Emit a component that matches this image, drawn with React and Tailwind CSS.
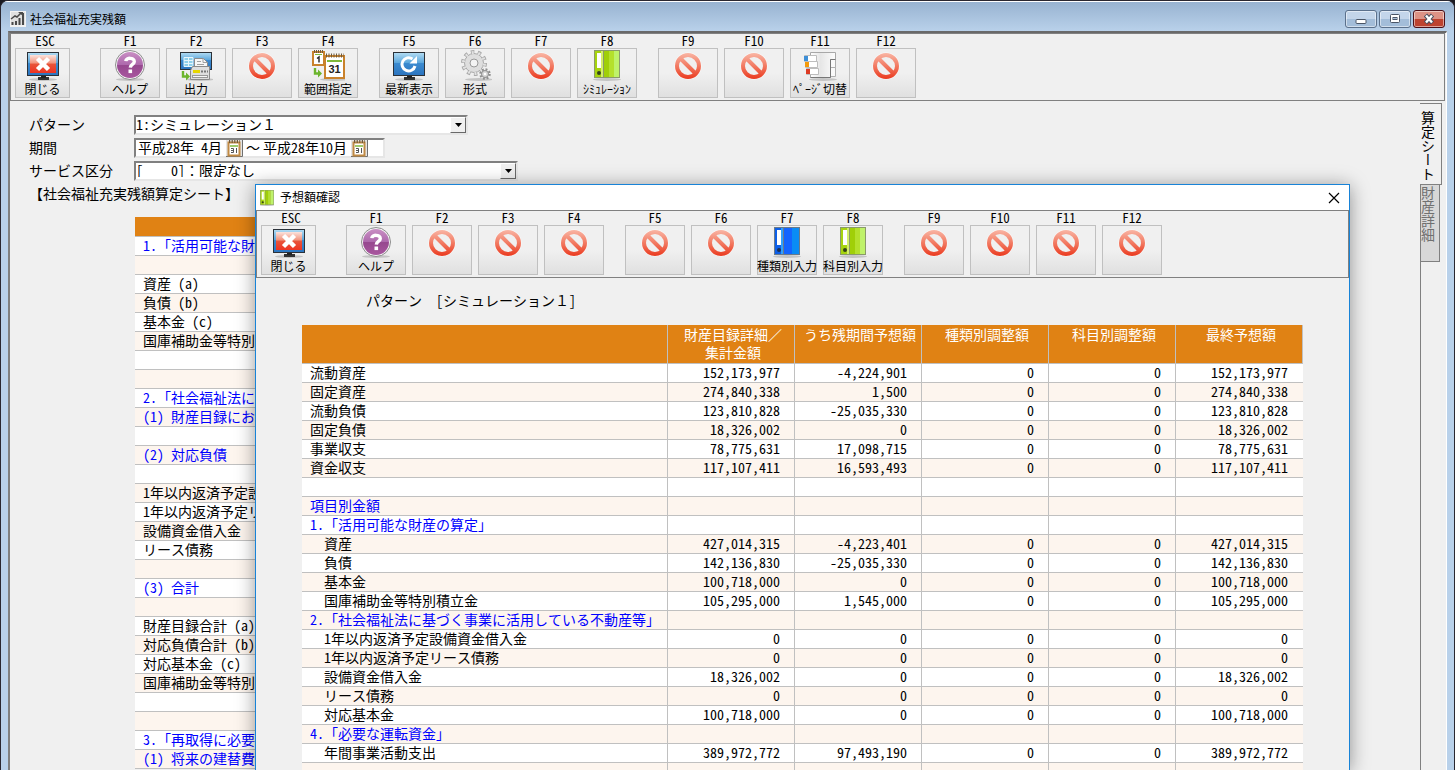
import React from 'react';
import clsx from 'clsx';

const Shadow = ({ cx = 17 }) => <ellipse cx={cx} cy="30.5" rx="14" ry="1.5" fill="#c4c4c4" />;

const Monitor = ({ children }) => (
  <>
    <Shadow />
    <rect x="12" y="28" width="11" height="3" fill="#333" />
    <rect x="15" y="26" width="5" height="3" fill="#222" />
    <rect x="1.5" y="3.5" width="31" height="23" fill="url(#screen)" stroke="#2b3138" />
    {children}
  </>
);

const ScreenGradient = () => (
  <linearGradient id="screen" x1="0" y1="0" x2="0" y2="1">
    <stop offset="0" stopColor="#b4ddf3" />
    <stop offset="0.45" stopColor="#5aa6dc" />
    <stop offset="0.46" stopColor="#3c8bd0" />
    <stop offset="1" stopColor="#2b74bf" />
  </linearGradient>
);

const CloseIcon = () => (
  <>
    <defs>
      <ScreenGradient />
      <linearGradient id="red" x1="0" y1="0" x2="0" y2="1">
        <stop offset="0" stopColor="#fbe3dd" />
        <stop offset="0.45" stopColor="#f2937c" />
        <stop offset="0.5" stopColor="#e8553b" />
        <stop offset="1" stopColor="#ee3322" />
      </linearGradient>
    </defs>
    <Monitor>
      <rect x="4" y="6" width="26" height="18" fill="url(#red)" />
      <path d="M11.5 9.5 L22.5 20.5 M22.5 9.5 L11.5 20.5" stroke="#fff" strokeWidth="4.5" />
    </Monitor>
  </>
);

const HelpIcon = () => (
  <>
    <defs>
      <linearGradient id="purple" x1="0" y1="0" x2="0" y2="1">
        <stop offset="0" stopColor="#c98fc4" />
        <stop offset="0.5" stopColor="#ad68ac" />
        <stop offset="0.52" stopColor="#96488f" />
        <stop offset="1" stopColor="#a9579f" />
      </linearGradient>
    </defs>
    <Shadow />
    <circle cx="17" cy="16" r="14.5" fill="#f4f4f4" stroke="#8d8d8d" />
    <circle cx="17" cy="16" r="13" fill="url(#purple)" />
    <path d="M12.8 12.2 C13 8.4 21.4 8.2 21.3 12.6 C21.2 15.6 17.4 15.2 17.3 18.6" fill="none" stroke="#fff" strokeWidth="3.4" />
    <rect x="15.5" y="20.5" width="3.6" height="3.6" fill="#fff" />
  </>
);

const BanIcon = () => (
  <>
    <defs>
      <linearGradient id="ban" gradientUnits="userSpaceOnUse" x1="0" y1="4" x2="0" y2="30">
        <stop offset="0" stopColor="#f9b5a4" />
        <stop offset="0.5" stopColor="#f27a62" />
        <stop offset="1" stopColor="#ea3a1f" />
      </linearGradient>
    </defs>
    <circle cx="17" cy="17" r="13.5" fill="#fff" opacity="0.8" />
    <circle cx="17" cy="17" r="11" fill="#f0f0f0" stroke="url(#ban)" strokeWidth="4" />
    <path d="M9.5 9.5 L24.5 24.5" stroke="url(#ban)" strokeWidth="4" />
  </>
);

const GreenArrow = ({ y }) => (
  <>
    <path d={`M4 ${y} v5.5 h4`} fill="none" stroke="#6cb52d" strokeWidth="2.4" />
    <path d={`M7 ${y + 1.5} l4 4 l-4 4 z`} fill="#6cb52d" />
  </>
);

const OutputIcon = () => (
  <>
    <defs><ScreenGradient /></defs>
    <Shadow cx={21} />
    <rect x="1.5" y="3.5" width="31" height="17" fill="url(#screen)" stroke="#2b3138" />
    <path d="M5 8.5 h9 v9 h-9 z M5 11.5 h9 M5 14.5 h9 M9.5 8.5 v9" fill="#8ed0ea" stroke="#e8f6fc" />
    <path d="M15.5 9.5 h9 l4 4 v6 h-13 z" fill="#f6f6f6" stroke="#8a8a8a" />
    <path d="M24 9.5 v4 h4 M18 12.5 h4 M18 15.5 h7" fill="none" stroke="#a0a0a0" />
    <path d="M13.5 17.5 h17 v13 h-19 v-9 z" fill="#dedede" stroke="#8a8a8a" />
    <rect x="14" y="21" width="7" height="3" fill="#e6d600" />
    <path d="M22 22.5 h7" stroke="#777" strokeDasharray="2 1" strokeWidth="2" />
    <rect x="13.5" y="26.5" width="15" height="2" fill="#f7f7f7" stroke="#999" />
    <GreenArrow y={22} />
  </>
);

const RangeIcon = () => (
  <>
    <Shadow cx={23} />
    <rect x="2" y="3" width="11" height="13" fill="#fff" stroke="#c9822c" strokeWidth="2" />
    <path d="M3 2.5 h10" stroke="#6f5a3c" strokeWidth="3" strokeDasharray="1 1" />
    <path d="M4 5.5 h7" stroke="#7fb93a" strokeWidth="1" />
    <path d="M6 9.5 L8 8 V13.5" fill="none" stroke="#222" strokeWidth="1.4" />
    <rect x="14" y="7" width="19" height="22" fill="#fff" stroke="#c9822c" strokeWidth="2" />
    <path d="M15 6.5 h18" stroke="#6f5a3c" strokeWidth="4" strokeDasharray="1 1.5" />
    <rect x="16" y="11" width="15" height="2" fill="#7fb93a" />
    <text x="23.5" y="24" textAnchor="middle" fontSize="11" fontWeight="700" fontFamily="Liberation Sans, sans-serif" fill="#222">31</text>
    <GreenArrow y={19} />
  </>
);

const RefreshIcon = () => (
  <>
    <defs><ScreenGradient /></defs>
    <Monitor>
      <path d="M23 17 A6.6 6.6 0 1 1 20.5 10" fill="none" stroke="#fff" strokeWidth="3" />
      <path d="M25 7 V14.5 H17.5 z" fill="#fff" />
    </Monitor>
  </>
);

const GearIcon = () => (
  <>
    <Shadow cx={21} />
    <circle cx="16" cy="14" r="11" fill="none" stroke="#a9a9a9" strokeWidth="4" strokeDasharray="3.46 3.45" />
    <circle cx="16" cy="14" r="9.5" fill="#dedede" stroke="#a9a9a9" />
    <circle cx="16" cy="14" r="10.5" fill="none" stroke="#e2e2e2" strokeWidth="3" strokeDasharray="1.9 4.7" strokeDashoffset="-0.7" />
    <circle cx="16" cy="14" r="4" fill="#f4f4f4" stroke="#999" />
    <circle cx="27" cy="25" r="4.5" fill="none" stroke="#8f8f8f" strokeWidth="2.5" strokeDasharray="1.8 1.73" />
    <circle cx="27" cy="25" r="3.5" fill="#d6d6d6" stroke="#8f8f8f" />
    <circle cx="27" cy="25" r="1.3" fill="#fff" />
  </>
);

const GreenBinder = () => (
  <>
    <Shadow />
    <rect x="4" y="1" width="26" height="28" fill="#8a9a6a" />
    <rect x="5" y="2" width="8" height="26" fill="#a6d40d" />
    <rect x="11" y="2" width="2" height="26" fill="#d4ef6a" />
    <rect x="14" y="2" width="5" height="26" fill="#a0cf08" />
    <rect x="19" y="2" width="5" height="26" fill="#b4e02c" />
    <rect x="24" y="2" width="5" height="26" fill="#bff26a" />
    <rect x="7" y="4" width="4" height="15" fill="#fff" />
    <circle cx="9" cy="24" r="2" fill="#33401a" />
  </>
);

const BlueBinder = () => (
  <>
    <Shadow />
    <rect x="4" y="1" width="26" height="28" fill="#6a7a8a" />
    <rect x="5" y="2" width="8" height="26" fill="#0d5fe8" />
    <rect x="11" y="2" width="2" height="26" fill="#2fa0ff" />
    <rect x="14" y="2" width="8" height="26" fill="#1464ff" />
    <rect x="22" y="2" width="7" height="26" fill="#0a8cf5" />
    <rect x="7" y="4" width="4" height="15" fill="#fff" />
    <circle cx="9" cy="24" r="2" fill="#1c2f50" />
  </>
);

const PagesIcon = () => (
  <>
    <defs>
      <linearGradient id="page" x1="0" y1="0" x2="1" y2="0">
        <stop offset="0" stopColor="#fff" />
        <stop offset="0.4" stopColor="#e6e6e6" />
        <stop offset="1" stopColor="#fdfdfd" />
      </linearGradient>
    </defs>
    <Shadow cx={20} />
    <path d="M26.5 10.5 h6 v8 h-6 z M26.5 18.5 h6 v9 h-6 z" fill="#fafafa" stroke="#b0b0b0" />
    <path d="M7.5 3.5 h25 v7 h-5 v18 h-20 z" fill="url(#page)" stroke="#a8a8a8" />
    <path d="M32.5 10.5 h-5 v18 h-20" fill="none" stroke="#777" />
    <path d="M1.5 6.5 h12 v6 h-12 z M2.5 12.5 h12 v6 h-12 z M3.5 19.5 h12 v6 h-12 z" fill="#fff" stroke="#bdbdbd" />
    <rect x="1" y="7" width="4" height="5" fill="#3f8fd6" />
    <rect x="2" y="13" width="4" height="5" fill="#f39a0c" />
    <rect x="3" y="20" width="4" height="5" fill="#dd3b24" />
  </>
);

const BinderSmall = () => (
  <svg className="h-4 w-[14px]" viewBox="4 1 26 30"><GreenBinder /></svg>
);

const CalendarSmall = () => (
  <svg className="h-[17px] w-[17px]" viewBox="0 0 17 17">
    <rect width="17" height="17" fill="#e4e4e4" />
    <path d="M16.5 0 v16.5 h-16.5" fill="none" stroke="#707070" />
    <rect x="2.5" y="2.5" width="11" height="13" fill="#fff" stroke="#c08a44" strokeWidth="2" />
    <path d="M3 1.5 h11" stroke="#6f5a3c" strokeWidth="3" strokeDasharray="1.2 1.4" />
    <path d="M4 6 h8" stroke="#7fb93a" strokeWidth="1.5" />
    <path d="M5 8.5 h2.5 v4 h-2.5 M5 10.5 h2.5 M10.5 8 v5" fill="none" stroke="#555" />
  </svg>
);

const AppIcon = () => (
  <svg className="h-4 w-4" viewBox="0 0 16 16">
    <rect width="16" height="16" fill="#f2f2f2" />
    <rect x="1" y="1" width="14" height="13" fill="#e0e0e0" />
    <path d="M2.5 14 v-3 M6 14 v-4 M9.5 14 v-7 M13 14 v-12" stroke="#4a4a4a" strokeWidth="2" />
    <path d="M1 8 L5 5 L7 6 L11 2" fill="none" stroke="#4a4a4a" strokeWidth="1.5" />
    <path d="M8 1 h5 v4 z" fill="#4a4a4a" />
  </svg>
);

const BLANK = { Icon: BanIcon, label: '' };

const mainKeys = [
  [{ Icon: HelpIcon, label: 'ヘルプ' }, { Icon: OutputIcon, label: '出力' }, BLANK, { Icon: RangeIcon, label: '範囲指定' }],
  [{ Icon: RefreshIcon, label: '最新表示' }, { Icon: GearIcon, label: '形式' }, BLANK, { Icon: GreenBinder, label: 'ｼﾐｭﾚｰｼｮﾝ' }],
  [BLANK, BLANK, { Icon: PagesIcon, label: 'ﾍﾟｰｼﾞ切替' }, BLANK],
];

const dialogKeys = [
  [{ Icon: HelpIcon, label: 'ヘルプ' }, BLANK, BLANK, BLANK],
  [BLANK, BLANK, { Icon: BlueBinder, label: '種類別入力' }, { Icon: GreenBinder, label: '科目別入力' }],
  [BLANK, BLANK, BLANK, BLANK],
];

const sheetRows = [
  ['1.「活用可能な財', true],
  [''],
  ['資産 (a)'],
  ['負債 (b)'],
  ['基本金 (c)'],
  ['国庫補助金等特別'],
  [''],
  [''],
  ['2.「社会福祉法に', true],
  ['(1) 財産目録にお', true],
  [''],
  ['(2) 対応負債', true],
  [''],
  ['1年以内返済予定設'],
  ['1年以内返済予定リ'],
  ['設備資金借入金'],
  ['リース債務'],
  [''],
  ['(3) 合計', true],
  [''],
  ['財産目録合計 (a)'],
  ['対応負債合計 (b)'],
  ['対応基本金 (c)'],
  ['国庫補助金等特別'],
  [''],
  [''],
  ['3.「再取得に必要', true],
  ['(1) 将来の建替費', true],
];

const columns = ['財産目録詳細／\n集計金額', 'うち残期間予想額', '種類別調整額', '科目別調整額', '最終予想額'];

const forecastRows = [
  { name: '流動資産', values: ['152,173,977', '-4,224,901', '0', '0', '152,173,977'] },
  { name: '固定資産', values: ['274,840,338', '1,500', '0', '0', '274,840,338'] },
  { name: '流動負債', values: ['123,810,828', '-25,035,330', '0', '0', '123,810,828'] },
  { name: '固定負債', values: ['18,326,002', '0', '0', '0', '18,326,002'] },
  { name: '事業収支', values: ['78,775,631', '17,098,715', '0', '0', '78,775,631'] },
  { name: '資金収支', values: ['117,107,411', '16,593,493', '0', '0', '117,107,411'] },
  { name: '' },
  { name: '項目別金額', heading: true },
  { name: '1.「活用可能な財産の算定」', heading: true },
  { name: '資産', indent: true, values: ['427,014,315', '-4,223,401', '0', '0', '427,014,315'] },
  { name: '負債', indent: true, values: ['142,136,830', '-25,035,330', '0', '0', '142,136,830'] },
  { name: '基本金', indent: true, values: ['100,718,000', '0', '0', '0', '100,718,000'] },
  { name: '国庫補助金等特別積立金', indent: true, values: ['105,295,000', '1,545,000', '0', '0', '105,295,000'] },
  { name: '2.「社会福祉法に基づく事業に活用している不動産等」', heading: true },
  { name: '1年以内返済予定設備資金借入金', indent: true, values: ['0', '0', '0', '0', '0'] },
  { name: '1年以内返済予定リース債務', indent: true, values: ['0', '0', '0', '0', '0'] },
  { name: '設備資金借入金', indent: true, values: ['18,326,002', '0', '0', '0', '18,326,002'] },
  { name: 'リース債務', indent: true, values: ['0', '0', '0', '0', '0'] },
  { name: '対応基本金', indent: true, values: ['100,718,000', '0', '0', '0', '100,718,000'] },
  { name: '4.「必要な運転資金」', heading: true },
  { name: '年間事業活動支出', indent: true, values: ['389,972,772', '97,493,190', '0', '0', '389,972,772'] },
  { name: '' },
];

const KeyButton = ({ keyName, Icon, label, narrow }) => (
  <div className={clsx('flex flex-col', narrow ? 'w-[55px]' : 'w-[60px]')}>
    <span className="h-[14px] w-[60px] text-center text-[13px] leading-[14px]">{keyName}</span>
    <button
      type="button"
      aria-label={`${keyName} ${label}`}
      className="flex h-[50px] flex-col items-center border border-[#c0c0c0] bg-linear-to-b from-[#f0f0f0] from-50% to-[#e0e0e0]"
    >
      <svg className="h-8 w-[34px] shrink-0" viewBox="0 0 34 32"><Icon /></svg>
      <span className="text-xs leading-4 whitespace-nowrap">{label}</span>
    </button>
  </div>
);

const KeyBar = ({ groups }) => (
  <div className="flex shrink-0 border border-[#808080] pb-0.5 pl-1">
    <KeyButton keyName="ESC" Icon={CloseIcon} label="閉じる" narrow />
    <div className="ml-[30px] flex gap-[21px]">
      {groups.map((group, g) => (
        <div key={g} className="flex gap-1.5">
          {group.map((item, i) => (
            <KeyButton key={i} keyName={`F${g * 4 + i + 1}`} {...item} />
          ))}
        </div>
      ))}
    </div>
  </div>
);

const fieldBorder = 'border-2 border-t-[#808080] border-l-[#808080] border-r-[#e6e6e6] border-b-[#e6e6e6] bg-white';

const SelectField = ({ id, value, className }) => (
  <div className={clsx('relative flex h-5', fieldBorder, className)}>
    <select id={id} className="w-full appearance-none pb-0.5 leading-[14px] outline-none">
      <option>{value}</option>
    </select>
    <span className="pointer-events-none absolute top-0 right-0 flex h-4 w-4 items-center justify-center border border-t-white border-r-[#696969] border-b-[#696969] border-l-white bg-[#f0f0f0]">
      <svg className="h-1 w-[7px]" viewBox="0 0 7 4"><path d="M0 0 h7 L3.5 4 z" fill="#000" /></svg>
    </span>
  </div>
);

const MonthField = ({ label, value }) => (
  <>
    <input type="text" aria-label={label} defaultValue={value} className="w-[86px] pb-0.5 outline-none" />
    <button type="button" aria-label={`${label}を選択`} className="ml-0.5"><CalendarSmall /></button>
  </>
);

const SearchForm = () => (
  <form className="flex flex-col gap-[3px] leading-[18px]">
    <div className="flex h-5">
      <label htmlFor="pattern" className="w-[105px]">パターン</label>
      <SelectField id="pattern" value="1:シミュレーション１" className="w-[334px]" />
    </div>
    <div className="flex h-5">
      <span className="w-[105px]">期間</span>
      <div className={clsx('flex h-5 w-[251px] items-center pl-0.5', fieldBorder)}>
        <MonthField label="開始月" value="平成28年 4月" />
        <span className="mx-[3px] pb-0.5">～</span>
        <MonthField label="終了月" value="平成28年10月" />
      </div>
    </div>
    <div className="flex h-5">
      <label htmlFor="service" className="w-[105px]">サービス区分</label>
      <SelectField id="service" value={'[\u00a0\u00a0\u00a0\u00a00]：限定なし'} className="w-[384px]" />
    </div>
    <h2 className="h-5">【社会福祉充実残額算定シート】</h2>
  </form>
);

const SheetTable = () => (
  <table className="mt-[13px] ml-[106px] w-3/4 table-fixed border-separate border-spacing-0">
    <thead>
      <tr><th aria-label="項目" className="h-5 border-b border-[#c0c0c0] bg-[#e08214] p-0" /></tr>
    </thead>
    <tbody>
      {sheetRows.map(([name, heading], i) => (
        <tr key={i} className="bg-white even:bg-[#fdf5ee]">
          <td className={clsx('h-[19px] border-b border-[#c0c0c0] p-0 pl-2 align-top leading-4 whitespace-nowrap', heading && 'text-[#0000ff]')}>
            {name}
          </td>
        </tr>
      ))}
    </tbody>
  </table>
);

const SideTabs = () => (
  <div className="mr-1 flex w-[22px] shrink-0 flex-col pt-0.5">
    <button type="button" className="flex h-[82px] items-end border-t border-r border-b border-[#808080] pt-[7px] pl-px leading-[14px] [writing-mode:vertical-rl]">
      算定シート
    </button>
    <button type="button" className="flex h-[77px] w-5 items-end border border-t-0 border-[#808080] bg-[#d8d8d8] pt-px leading-[14px] text-[#707070] [writing-mode:vertical-rl]">
      財産詳細
    </button>
    <div className="flex-1 border-l border-[#808080]" />
  </div>
);

const ForecastTable = () => (
  <table className="w-full table-fixed border-separate border-spacing-0">
    <thead>
      <tr className="bg-[#e08214] text-white">
        <th aria-label="項目" className="h-[39px] border-r border-b border-[#c0c0c0] p-0" />
        {columns.map((col) => (
          <th key={col} className="w-[127px] border-r border-b border-[#c0c0c0] py-0 pr-0 pl-1 align-top leading-[18px] font-normal whitespace-pre-line">{col}</th>
        ))}
      </tr>
    </thead>
    <tbody>
      {forecastRows.map(({ name, heading, indent, values = ['', '', '', '', ''] }, i) => (
        <tr key={i} className="bg-white even:bg-[#fdf5ee]">
          <td
            className={clsx(
              'h-[19px] border-r border-b border-[#c0c0c0] p-0 align-top leading-4 whitespace-nowrap',
              indent ? 'pl-[22px]' : 'pl-2',
              heading && 'text-[#0000ff]',
            )}
          >
            {name}
          </td>
          {values.map((value, c) => (
            <td key={c} className="border-r border-b border-[#c0c0c0] p-0 pr-[14px] text-right align-top leading-4 last:border-r-0 last:pr-[15px]">
              {value}
            </td>
          ))}
        </tr>
      ))}
    </tbody>
  </table>
);

const ForecastDialog = () => (
  <section
    role="dialog"
    aria-label="予想額確認"
    className="absolute top-[184px] right-[105px] bottom-0 left-[255px] flex flex-col overflow-hidden border border-b-0 border-[#1883d7] bg-[#f0f0f0] shadow-[0_2px_18px_rgba(0,0,0,0.4)]"
  >
    <header className="flex h-[25px] shrink-0 items-center bg-white pr-2 pl-1 text-xs">
      <BinderSmall />
      <h2 className="ml-1.5 flex-1 pb-0.5">予想額確認</h2>
      <button type="button" aria-label="閉じる">
        <svg className="h-[14px] w-[14px]" viewBox="0 0 14 14"><path d="M2 2 L12 12 M12 2 L2 12" stroke="#000" strokeWidth="1.2" /></svg>
      </button>
    </header>
    <KeyBar groups={dialogKeys} />
    <div className="px-[46px] pt-[13px]">
      <p className="mb-[14px] h-5 pl-16 leading-[18px]">パターン　[シミュレーション１]</p>
      <ForecastTable />
    </div>
  </section>
);

const captionButton = 'flex h-[18px] w-8 items-center justify-center rounded-[3px] border shadow-[inset_0_0_0_1px_rgba(255,255,255,0.5)]';

const TitleBar = () => (
  <header className="flex h-[30px] shrink-0 items-center border-t border-white bg-linear-to-b from-[#98b3d1] to-[#b9d1ea] pt-1 pr-[9px] pl-[9px] text-xs">
    <AppIcon />
    <h1 className="ml-1 flex-1">社会福祉充実残額</h1>
    <div className="flex gap-0.5">
      <button type="button" aria-label="最小化" className={clsx(captionButton, 'border-[#5b708b] bg-linear-to-b from-[#c3d5ea] from-50% to-[#a3bdd9] to-50%')}>
        <svg className="h-3 w-4" viewBox="0 0 16 12"><rect x="3" y="6.5" width="10" height="4" rx="1" fill="#fff" stroke="#4a5566" /></svg>
      </button>
      <button type="button" aria-label="最大化" className={clsx(captionButton, 'border-[#5b708b] bg-linear-to-b from-[#c3d5ea] from-50% to-[#a3bdd9] to-50%')}>
        <svg className="h-3 w-4" viewBox="0 0 16 12">
          <rect x="3.5" y="1.5" width="9" height="8" rx="1" fill="#fff" stroke="#4a5566" />
          <rect x="6" y="4.5" width="4" height="2" fill="#a9bfd8" stroke="#4a5566" />
        </svg>
      </button>
      <button type="button" aria-label="ウィンドウを閉じる" className={clsx(captionButton, 'border-[#4c1018] bg-linear-to-b from-[#dd9285] from-50% to-[#bd4330] to-50%')}>
        <svg className="h-3 w-4" viewBox="0 0 16 12">
          <path d="M4.5 2 L11.5 10 M11.5 2 L4.5 10" stroke="#4a4f5e" strokeWidth="4.4" />
          <path d="M5 2.5 L11 9.5 M11 2.5 L5 9.5" stroke="#fff" strokeWidth="2.4" />
        </svg>
      </button>
    </div>
  </header>
);

const App = () => (
  <div className="bg-[#1a1a22] font-['Noto_Sans_Mono_CJK_JP','Noto_Sans_CJK_JP',monospace] text-sm text-black">
    <div className="relative flex h-screen flex-col overflow-hidden rounded-t-lg border border-b-0 border-[#2a2730] bg-[#b9d1ea]">
      <TitleBar />
      <div className="mr-[7px] ml-[7px] flex min-h-0 flex-1 flex-col border-t-2 border-r border-l-2 border-t-[#696969] border-r-white border-l-[#808080] bg-[#f0f0f0]">
        <div className="mr-px"><KeyBar groups={mainKeys} /></div>
        <div className="flex min-h-0 flex-1">
          <main className="min-w-0 flex-1 overflow-hidden pt-[14px] pl-[19px]">
            <SearchForm />
            <SheetTable />
          </main>
          <SideTabs />
        </div>
      </div>
    </div>
    <ForecastDialog />
  </div>
);

export default App;
